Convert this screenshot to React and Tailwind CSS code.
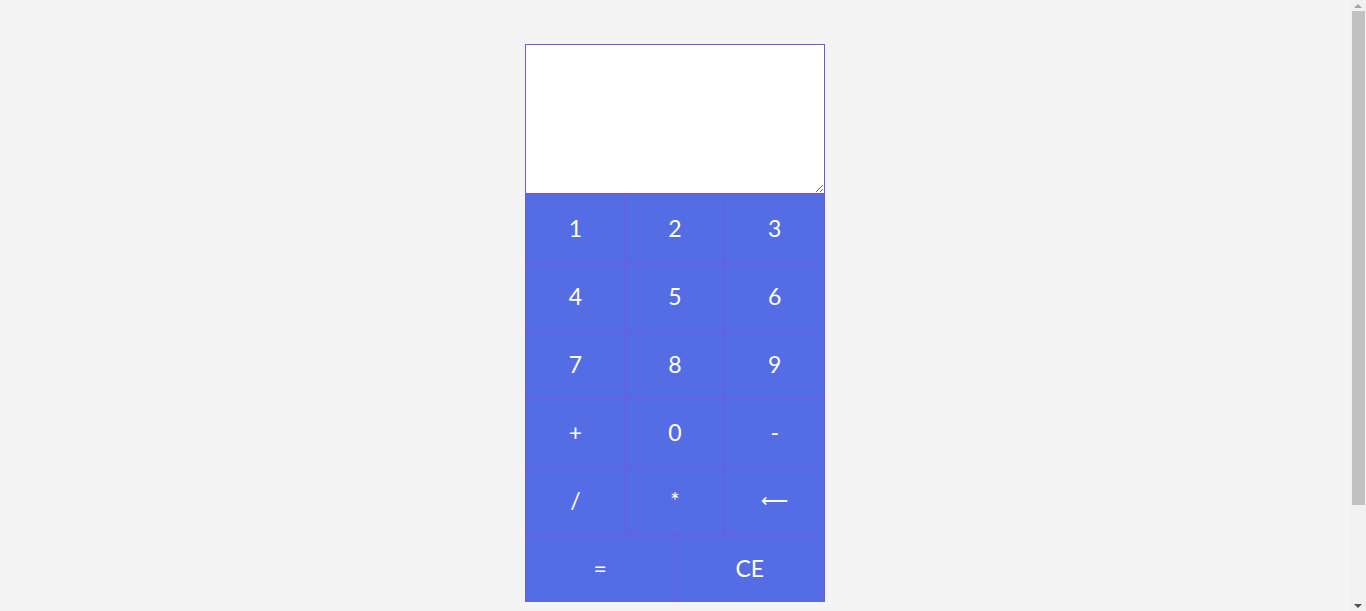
const keys = ["1", "2", "3", "4", "5", "6", "7", "8", "9", "+", "0", "-", "/", "*"];

export default function App() {
  return (
    <div className="flex h-screen overflow-hidden bg-[#f4f4f4] font-['Lato',sans-serif]">
      <main className="flex-1 pt-[44px]">
        <div className="mx-auto w-[300px]">
          <textarea className="block h-[150px] w-[300px] border border-[#7158e2] bg-white outline-none" />
          <div className="grid grid-cols-6 auto-rows-[67px] gap-px bg-[#7158e2] px-px pt-px">
            {keys.map((k) => (
              <button
                key={k}
                className="col-span-2 flex items-center justify-center bg-[#546de5] text-[23px] text-white"
              >
                {k}
              </button>
            ))}
            <button className="col-span-2 flex items-center justify-center bg-[#546de5] text-[19px] text-white">⟵</button>
            <button className="col-span-3 flex items-center justify-center bg-[#546de5] text-[23px] text-white">=</button>
            <button className="col-span-3 flex items-center justify-center bg-[#546de5] text-[23px] text-white">CE</button>
          </div>
        </div>
      </main>
      {/* scrollbar */}
      <div className="flex w-[16px] flex-col items-center bg-[#f1f1f1]">
        <div className="flex h-[11px] items-center justify-center">
          <div className="h-0 w-0 border-x-[4px] border-b-[4px] border-x-transparent border-b-[#a3a3a3]" />
        </div>
        <div className="h-[494px] w-[13px] bg-[#c1c1c1]" />
        <div className="flex-1" />
        <div className="flex h-[11px] items-center justify-center">
          <div className="h-0 w-0 border-x-[4px] border-t-[4px] border-x-transparent border-t-[#505050]" />
        </div>
      </div>
    </div>
  );
}
